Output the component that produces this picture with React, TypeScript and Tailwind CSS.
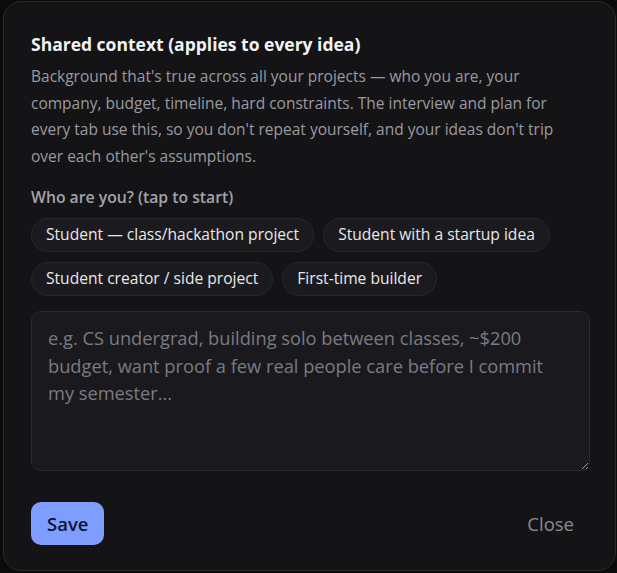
import React from "react";

const chips = [
  "Student — class/hackathon project",
  "Student with a startup idea",
  "Student creator / side project",
  "First-time builder",
];

export default function App() {
  return (
    <div
      className="w-[617px] h-[573px] bg-[#0b0b0c] overflow-hidden pl-[3px] pt-[1px]"
      style={{ fontFamily: '"Open Sans", "Noto Sans", sans-serif' }}
    >
      <div className="w-[613px] h-[570px] bg-[#141417] border border-[#2a2a2e] rounded-[18px] pl-[27px] pr-[25px] pt-[28px] pb-[25px] flex flex-col">
        <h2 className="text-[17.5px] leading-[28px] font-bold text-[#f2f2f4]">
          Shared context (applies to every idea)
        </h2>
        <p className="mt-[5px] w-[545px] text-[15.5px] leading-[26.5px] text-[#9a9aa0]">
          Background that's true across all your projects — who you are, your
          company, budget, timeline, hard constraints. The interview and plan
          for every tab use this, so you don't repeat yourself, and your ideas
          don't trip over each other's assumptions.
        </p>
        <div className="mt-[17px] text-[15.75px] leading-[22px] font-semibold text-[#a3a3a8]">
          Who are you? (tap to start)
        </div>
        <div className="mt-[10px] flex flex-wrap gap-x-[9px] gap-y-[10px]">
          {chips.map((c) => (
            <button
              key={c}
              className="h-[34px] px-[14px] rounded-full bg-[#1b1b1f] border border-[#28282c] text-[15.6px] text-[#e8e8ea] whitespace-nowrap"
            >
              {c}
            </button>
          ))}
        </div>
        <textarea
          className="mt-[15px] h-[160px] w-full resize-y rounded-[10px] bg-[#1a1a1e] border border-[#2a2a2f] px-[16px] py-[12px] text-[18.25px] leading-[27.5px] text-[#e8e8ea] placeholder:text-[#7a7a82] outline-none"
          placeholder="e.g. CS undergrad, building solo between classes, ~$200 budget, want proof a few real people care before I commit my semester..."
        />
        <div className="mt-auto flex items-center justify-between">
          <button className="h-[43px] px-[16px] rounded-[10px] bg-[#7f9dff] text-[#0d1430] text-[18.5px] font-semibold">
            Save
          </button>
          <button className="h-[43px] px-[16px] text-[18.5px] text-[#8a8a90]">
            Close
          </button>
        </div>
      </div>
    </div>
  );
}
